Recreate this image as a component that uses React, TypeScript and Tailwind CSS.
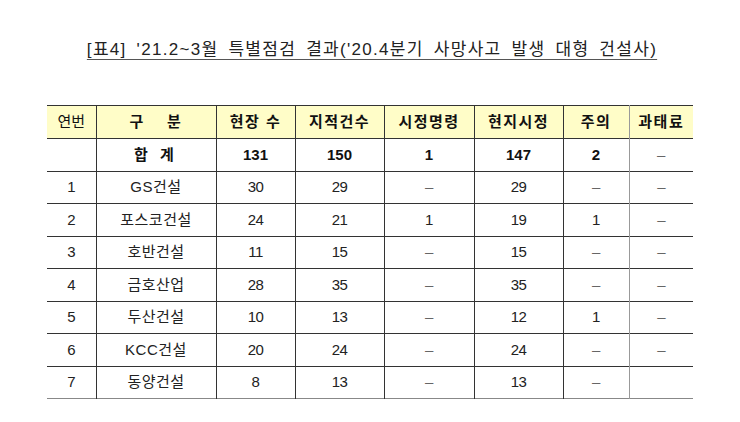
import React from "react";

const rows = [
  ["1", "GS건설", "30", "29", "–", "29", "–", "–"],
  ["2", "포스코건설", "24", "21", "1", "19", "1", "–"],
  ["3", "호반건설", "11", "15", "–", "15", "–", "–"],
  ["4", "금호산업", "28", "35", "–", "35", "–", "–"],
  ["5", "두산건설", "10", "13", "–", "12", "1", "–"],
  ["6", "KCC건설", "20", "24", "–", "24", "–", "–"],
  ["7", "동양건설", "8", "13", "–", "13", "–", ""],
];

const widths = ["w-[49px]", "w-[120px]", "w-[79px]", "w-[89px]", "w-[90px]", "w-[89px]", "w-[66px]", "w-[64px]"];
const headers = ["연번", "구　 분", "현장 수", "지적건수", "시정명령", "현지시정", "주의", "과태료"];
const total = ["", "합 계", "131", "150", "1", "147", "2", "–"];

function cellBorder(i: number) {
  if (i === 6) return "border-r border-[#999]";
  if (i === 7) return "";
  return "border-r border-[#333]";
}

export default function App() {
  return (
    <div className="w-[740px] h-[422px] bg-white text-[#111] font-['Liberation_Sans','Noto_Sans_CJK_KR',sans-serif]">
      <div className="pt-[39px] flex justify-center">
        <h1 className="text-[17px] leading-[22px] tracking-[1.3px] [word-spacing:4px] underline underline-offset-[4px] decoration-[#555] font-normal text-[#222] pl-[4px]">
          [표4] '21.2~3월 특별점검 결과('20.4분기 사망사고 발생 대형 건설사)
        </h1>
      </div>
      <div className="pl-[47px] pt-[44px]">
        <table className="border-collapse table-fixed w-[646px] text-center">
          <colgroup>
            {widths.map((w, i) => (
              <col key={i} className={w} />
            ))}
          </colgroup>
          <thead>
            <tr className="bg-[#fffdc8] h-[33px] border-t border-b border-[#333]">
              {headers.map((h, i) => (
                <th
                  key={i}
                  className={`${cellBorder(i)} text-[15px] whitespace-pre ${i === 0 ? "font-normal tracking-normal" : "font-semibold tracking-[1.5px]"}`}
                >
                  {h}
                </th>
              ))}
            </tr>
          </thead>
          <tbody>
            <tr className="h-[32.5px] border-b border-[#333]">
              {total.map((c, i) => (
                <td
                  key={i}
                  className={`${cellBorder(i)} text-[15px] ${c === "–" ? "font-normal text-[#666]" : "font-semibold"} ${i === 1 ? "tracking-[4px]" : ""}`}
                >
                  {c}
                </td>
              ))}
            </tr>
            {rows.map((r, ri) => (
              <tr key={ri} className={`h-[32.5px] border-b ${ri === rows.length - 1 ? "border-[#888]" : "border-[#333]"}`}>
                {r.map((c, i) => (
                  <td
                    key={i}
                    className={`${cellBorder(i)} text-[15px] ${c === "–" ? "text-[#666]" : "text-[#222]"} ${i === 1 ? "tracking-[0.5px]" : "tracking-[-0.5px]"}`}
                  >
                    {c}
                  </td>
                ))}
              </tr>
            ))}
          </tbody>
        </table>
      </div>
    </div>
  );
}
